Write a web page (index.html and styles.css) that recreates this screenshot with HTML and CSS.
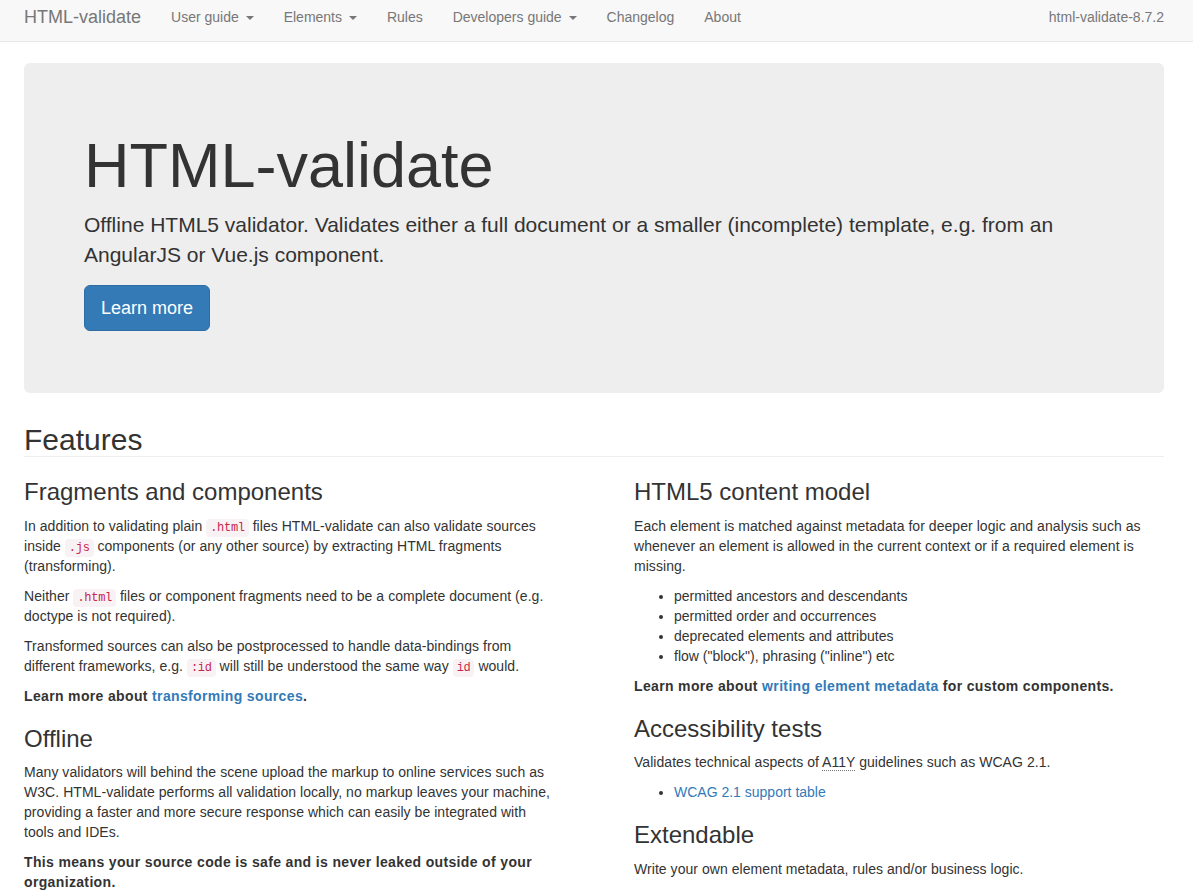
FILE: index.html
```html
<!DOCTYPE html>
<html lang="en">
<head>
<meta charset="utf-8">
<title>HTML-validate</title>
<link rel="stylesheet" href="styles.css">
</head>
<body>
<nav class="navbar">
  <div class="container navbar-inner">
    <a class="brand" href="#">HTML-validate</a>
    <ul class="nav">
      <li><a href="#">User guide <span class="caret"></span></a></li>
      <li><a href="#">Elements <span class="caret"></span></a></li>
      <li><a href="#">Rules</a></li>
      <li><a href="#">Developers guide <span class="caret"></span></a></li>
      <li><a href="#">Changelog</a></li>
      <li><a href="#">About</a></li>
    </ul>
    <span class="version">html-validate-8.7.2</span>
  </div>
</nav>

<main class="container">
  <section class="jumbotron">
    <h1>HTML-validate</h1>
    <p class="lead">Offline HTML5 validator. Validates either a full document or a smaller (incomplete) template, e.g. from an AngularJS or Vue.js component.</p>
    <div class="actions"><a class="btn" href="#">Learn more</a></div>
  </section>

  <h2 class="page-header">Features</h2>

  <div class="features">
    <div class="col">
      <h3>Fragments and components</h3>
      <p>In addition to validating plain <code>.html</code> files HTML-validate can also validate sources inside <code>.js</code> components (or any other source) by extracting HTML fragments (transforming).</p>
      <p>Neither <code>.html</code> files or component fragments need to be a complete document (e.g. doctype is not required).</p>
      <p>Transformed sources can also be postprocessed to handle data-bindings from different frameworks, e.g. <code>:id</code> will still be understood the same way <code>id</code> would.</p>
      <p><strong>Learn more about <a href="#">transforming sources</a>.</strong></p>

      <h3>Offline</h3>
      <p>Many validators will behind the scene upload the markup to online services such as W3C. HTML-validate performs all validation locally, no markup leaves your machine, providing a faster and more secure response which can easily be integrated with tools and IDEs.</p>
      <p><strong>This means your source code is safe and is never leaked outside of your organization.</strong></p>
    </div>
    <div class="col">
      <h3>HTML5 content model</h3>
      <p>Each element is matched against metadata for deeper logic and analysis such as whenever an element is allowed in the current context or if a required element is missing.</p>
      <ul>
        <li>permitted ancestors and descendants</li>
        <li>permitted order and occurrences</li>
        <li>deprecated elements and attributes</li>
        <li>flow ("block"), phrasing ("inline") etc</li>
      </ul>
      <p><strong>Learn more about <a href="#">writing element metadata</a> for custom components.</strong></p>

      <h3>Accessibility tests</h3>
      <p>Validates technical aspects of <abbr title="Accessibility">A11Y</abbr> guidelines such as WCAG 2.1.</p>
      <ul>
        <li><a href="#">WCAG 2.1 support table</a></li>
      </ul>

      <h3>Extendable</h3>
      <p>Write your own element metadata, rules and/or business logic.</p>
      <p><strong>Learn more about <a href="#">writing custom rules</a> and plugins.</strong></p>
    </div>
  </div>
</main>
</body>
</html>
```

FILE: styles.css
```css
* {
  box-sizing: border-box;
}

html, body {
  margin: 0;
  padding: 0;
}

body {
  font-family: "Liberation Sans", Arial, Helvetica, sans-serif;
  font-size: 14px;
  line-height: 20px;
  color: #333;
  background: #fff;
}

a {
  color: #337ab7;
  text-decoration: none;
}

.container {
  width: 1140px;
  margin-left: 24px;
}

/* Navbar */
.navbar {
  background: #f8f8f8;
  border-bottom: 1px solid #e7e7e7;
  height: 42px;
}

.navbar-inner {
  display: flex;
  align-items: flex-start;
  height: 41px;
}

.brand {
  font-size: 18px;
  line-height: 20px;
  color: #777;
  padding: 7px 15px 0 0;
}

.nav {
  display: flex;
  list-style: none;
  margin: 0;
  padding: 0;
}

.nav a {
  display: block;
  padding: 7px 15px 0;
  line-height: 20px;
  color: #777;
}

.caret {
  display: inline-block;
  width: 0;
  height: 0;
  margin-left: 3px;
  vertical-align: middle;
  border-top: 4px solid #777;
  border-right: 4px solid transparent;
  border-left: 4px solid transparent;
}

.version {
  margin-left: auto;
  padding-top: 7px;
  line-height: 20px;
  color: #777;
}

/* Jumbotron */
.jumbotron {
  margin-top: 21px;
  margin-bottom: 30px;
  padding: 48px 60px 47px;
  background: #eee;
  border-radius: 6px;
}

.jumbotron h1 {
  margin: 20px 0 10px;
  font-size: 63px;
  line-height: 1.1;
  font-weight: normal;
  color: #333;
}

.lead {
  margin: 0 0 15px;
  font-size: 21px;
  line-height: 30px;
}

.actions {
  display: flex;
  margin-bottom: 15px;
}

.btn {
  display: inline-block;
  padding: 10px 16px;
  font-size: 18px;
  line-height: 24px;
  color: #fff;
  background: #337ab7;
  border: 1px solid #2e6da4;
  border-radius: 6px;
}

/* Features */
.page-header {
  margin: 0 0 2px;
  font-size: 30px;
  line-height: 33px;
  font-weight: normal;
  border-bottom: 1px solid #eee;
}

.features {
  display: grid;
  grid-template-columns: 530px 530px;
  column-gap: 80px;
}

.col h3 {
  margin: 20px 0 10px;
  font-size: 24px;
  line-height: 26.4px;
  font-weight: normal;
}

.col p {
  margin: 0 0 10px;
  letter-spacing: 0.05px;
}

.col ul {
  margin: 0 0 10px;
  padding-left: 40px;
}

code {
  font-family: "Liberation Mono", "DejaVu Sans Mono", monospace;
  font-size: 12px;
  line-height: 1;
  letter-spacing: -0.3px;
  padding: 2px 4px;
  color: #c7254e;
  background: #f9f2f4;
  border-radius: 4px;
}

abbr {
  text-decoration: none;
  border-bottom: 1px dotted #777;
  cursor: help;
}

strong {
  font-weight: bold;
  letter-spacing: 0.35px;
}
```
